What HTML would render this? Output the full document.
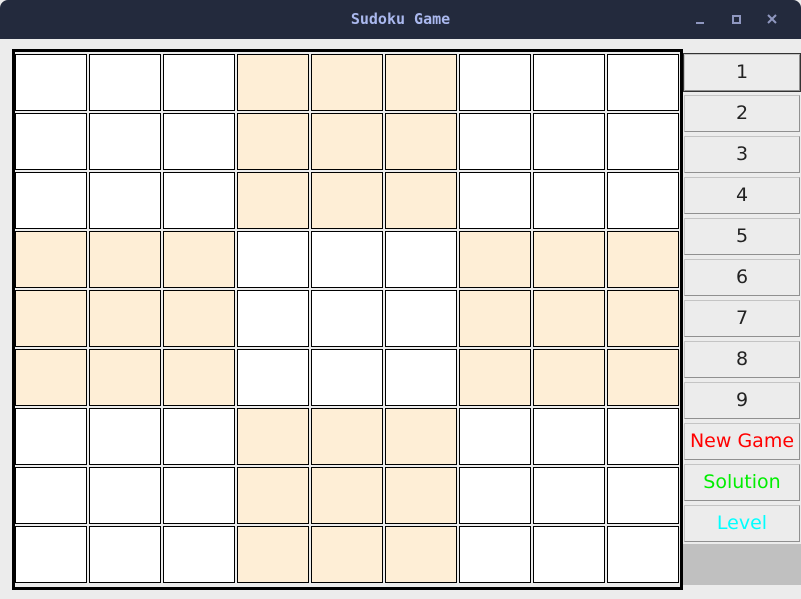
<!DOCTYPE html><html><head><style>
body{margin:0;width:801px;height:599px;background:#ececec;overflow:hidden;font-family:"DejaVu Sans","Liberation Sans",sans-serif;position:relative}
.tb{position:absolute;left:0;top:0;width:801px;height:39px;background:#232a3d;border-radius:8px 8px 0 0}
.tt{position:absolute;left:0;width:801px;top:10px;text-align:center;color:#aab8ee;font:bold 15px "DejaVu Sans Mono","Liberation Mono",monospace}
.grid{position:absolute;left:12px;top:49px;width:665px;height:535px;border:3px solid #000;background:#ececec}
.c{position:absolute;width:70px;height:55px;border:1px solid #000;background:#fff}
.o{background:#feeed6}
.b{position:absolute;left:684px;width:114px;height:35px;border:1px solid;border-color:#c4c4c4 #909090 #909090 #c4c4c4;background:#ececec;text-align:center;line-height:35px;font-size:19px;color:#222}
</style></head><body>
<div class="tb"><div class="tt">Sudoku Game</div>
<div style="position:absolute;left:696px;top:22px;width:8px;height:2px;background:#8f97c0"></div>
<div style="position:absolute;left:732px;top:15px;width:5px;height:5px;border:2px solid #8f97c0"></div>
<svg style="position:absolute;left:767px;top:14px" width="10" height="10"><path d="M1 1L9 9M9 1L1 9" stroke="#8f97c0" stroke-width="2"/></svg>
</div>
<div class="grid" id="g"></div>
<div id="bs"></div>
<div style="position:absolute;left:683px;top:544px;width:118px;height:41px;background:#c0c0c0"></div>
<script>
var g=document.getElementById('g'),h='';
for(var r=0;r<9;r++)for(var c=0;c<9;c++){var br=Math.floor(r/3),bc=Math.floor(c/3);var o=((br+bc)%2==1);
h+='<div class="c'+(o?' o':'')+'" style="left:'+(c*74)+'px;top:'+(2+r*59)+'px"></div>';}
g.innerHTML=h;
var L=['1','2','3','4','5','6','7','8','9','New Game','Solution','Level'],C=['','','','','','','','','','#f00','#0e0','#0ff'],s='';
for(var i=0;i<12;i++)s+='<div class="b" style="top:'+(54+i*41)+'px;'+(C[i]?'color:'+C[i]+';':'')+(i==0?'outline:1px solid #333;':'')+'">'+L[i]+'</div>';
document.getElementById('bs').innerHTML=s;
</script>
</body></html>
